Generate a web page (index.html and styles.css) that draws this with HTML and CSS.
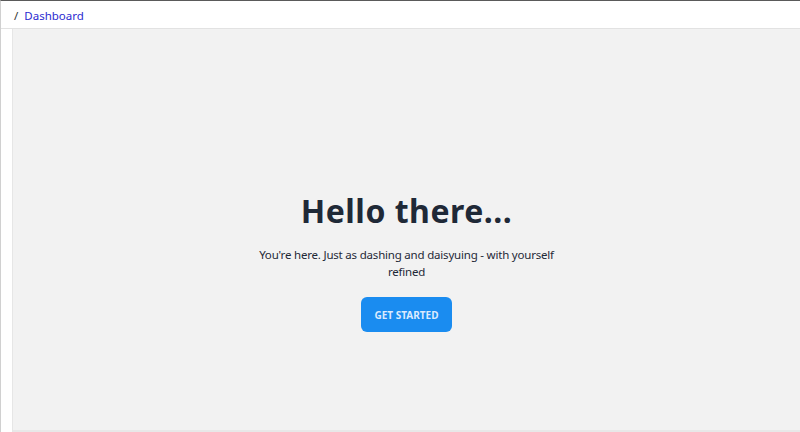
FILE: index.html
```html
<!DOCTYPE html>
<html>
<head>
<meta charset="utf-8">
<link rel="stylesheet" href="styles.css">
</head>
<body>
<div class="frame">
  <header class="topbar">
    <nav class="crumbs"><span class="sep">/</span><a class="crumb" href="#">Dashboard</a></nav>
  </header>
  <div class="layout">
    <aside class="side"></aside>
    <main class="main">
      <div class="hero">
        <h1 class="title">Hello there...</h1>
        <p class="lead">You're here. Just as dashing and daisyuing - with yourself refined</p>
        <button class="btn">GET STARTED</button>
      </div>
    </main>
  </div>
</div>
</body>
</html>
```
FILE: styles.css
```css
html, body { margin: 0; padding: 0; }
body {
  font-family: "Noto Sans", "Open Sans", sans-serif;
  background: #ffffff;
  width: 800px;
  height: 432px;
  overflow: hidden;
}
.frame {
  height: 432px;
  box-sizing: border-box;
  border-top: 1px solid #5a5a5a;
  border-left: 1px solid #d0d0d0;
  display: flex;
  flex-direction: column;
}
.topbar {
  height: 28px;
  box-sizing: border-box;
  border-bottom: 1px solid #e2e2e2;
  display: flex;
  align-items: center;
  padding-left: 13px;
  padding-top: 1px;
  background: #fff;
}
.crumbs { display: flex; align-items: center; gap: 6px; font-size: 11.5px; }
.sep { color: #333; }
.crumb { color: #2b2bd0; text-decoration: none; }
.layout { flex: 1; display: flex; }
.side {
  width: 11px;
  background: #fff;
  border-right: 1px solid #e6e6e6;
}
.main {
  flex: 1;
  background: #f2f2f2;
  display: flex;
  align-items: center;
  justify-content: center;
  border-bottom: 2px solid #e8e8e8;
  padding-top: 64px;
}
.hero { text-align: center; max-width: 310px; display: flex; flex-direction: column; align-items: center; }
.title {
  margin: 0;
  font-size: 32px;
  font-weight: 700;
  color: #1f2937;
  line-height: 40px;
  letter-spacing: 0.5px;
  white-space: nowrap;
}
.lead {
  margin: 15px 0 0;
  font-size: 11.5px;
  line-height: 17px;
  letter-spacing: -0.2px;
  color: #1f2937;
}
.btn {
  margin-top: 17px;
  height: 35px;
  padding: 0 14px;
  background: #1a8cf0;
  color: #dbeafe;
  border: none;
  border-radius: 6px;
  font-family: inherit;
  font-size: 10px;
  font-weight: 700;
}
```
